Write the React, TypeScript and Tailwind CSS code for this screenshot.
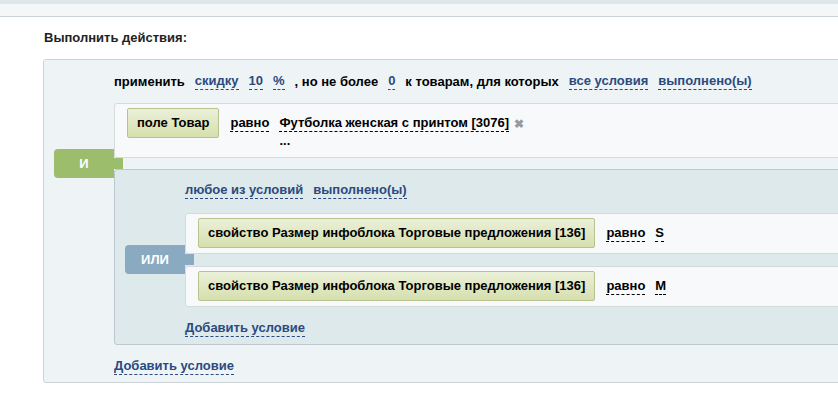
import type { ReactNode } from 'react';

function Link({ children }: { children: ReactNode }) {
    return (
        <span className="inline-block leading-[16px] text-[#2b4a80] border-b border-dashed border-[#2b4a80]">
            {children}
        </span>
    );
}

function Val({ children }: { children: ReactNode }) {
    return (
        <span className="inline-block leading-[16px] text-black border-b border-dashed border-black">
            {children}
        </span>
    );
}

function FieldButton({ children }: { children: ReactNode }) {
    return (
        <div className="h-[30px] shrink-0 flex items-center px-[9px] rounded-[2px] border border-[#b8c28f] bg-gradient-to-b from-[#ebf0d8] to-[#d6dfad] text-black whitespace-nowrap">
            {children}
        </div>
    );
}

function Badge({ label, color }: { label: string; color: string }) {
    // label sits in the gap between two rows, with a small tab reaching into the gap
    return (
        <div className="absolute left-[-60px] top-[-9px] w-[70px] h-[29px]">
            <div className={`absolute left-0 top-0 w-[60px] h-[29px] rounded-l-[4px] flex items-center justify-center text-white ${color}`}>
                {label}
            </div>
            <div className={`absolute left-[59px] top-[9px] w-[10px] h-[11px] ${color}`} />
        </div>
    );
}

function PropRow({ value }: { value: string }) {
    return (
        <div className="h-[41px] flex items-start pl-[12px] pt-[4px] border border-[#d5dadd] rounded-[3px] bg-[#f8f9fb]">
            <FieldButton>свойство Размер инфоблока Торговые предложения [136]</FieldButton>
            <div className="mt-[7px] ml-[11px] flex gap-[10px]">
                <Val>равно</Val>
                <Val>{value}</Val>
            </div>
        </div>
    );
}

export default function App() {
    return (
        <div className="w-[838px] h-[395px] overflow-hidden bg-white text-[13px] font-bold text-black font-['Liberation_Sans',Arial,sans-serif]">
            <div className="h-[4px] bg-[#dfe6e9]" />
            <div className="h-[13px] bg-[#f4f7f8] border-b border-[#c9d1d7]" />

            <div className="pl-[43px] pt-[13px]">
                <div className="ml-[1px] leading-[16px] text-[#222]">Выполнить действия:</div>

                <div className="mt-[13px] w-[830px] border border-[#cdd4d7] rounded-[3px] bg-[#eef4f6] pl-[70px] pb-[7px]">
                    <div className="h-[43px] flex items-center gap-[10px] whitespace-nowrap">
                        <span className="leading-[16px]">применить</span>
                        <Link>скидку</Link>
                        <Link>10</Link>
                        <Link>%</Link>
                        <span className="leading-[16px]">, но не более</span>
                        <Link>0</Link>
                        <span className="leading-[16px]">к товарам, для которых</span>
                        <Link>все условия</Link>
                        <Link>выполнено(ы)</Link>
                    </div>

                    <div className="h-[55px] flex items-start pl-[12px] pt-[4px] border border-[#d5dadd] rounded-[3px] bg-[#f8f9fb]">
                        <FieldButton>поле Товар</FieldButton>
                        <div className="mt-[7px] ml-[11px] flex">
                            <Val>равно</Val>
                        </div>
                        <div className="mt-[7px] ml-[10px] flex flex-col">
                            <div className="flex items-center">
                                <Val>Футболка женская с принтом [3076]</Val>
                                <span className="ml-[5px] text-[12px] leading-[14px] text-[#9a9a9a]">✖</span>
                            </div>
                            <div className="leading-[18px]">...</div>
                        </div>
                    </div>

                    <div className="relative h-[11px]">
                        <Badge label="И" color="bg-[#9cbd6b]" />
                    </div>

                    <div className="border border-[#bcc8cd] rounded-[3px] bg-[#dde9eb] pl-[70px] pb-[7px]">
                        <div className="h-[43px] pb-[2px] flex items-center gap-[10px]">
                            <Link>любое из условий</Link>
                            <Link>выполнено(ы)</Link>
                        </div>
                        <PropRow value="S" />
                        <div className="relative h-[12px]">
                            <Badge label="ИЛИ" color="bg-[#8aaac1]" />
                        </div>
                        <PropRow value="M" />
                        <div className="pt-[13px] flex">
                            <Link>Добавить условие</Link>
                        </div>
                    </div>

                    <div className="mt-[13px] flex">
                        <Link>Добавить условие</Link>
                    </div>
                </div>
            </div>
        </div>
    );
}
